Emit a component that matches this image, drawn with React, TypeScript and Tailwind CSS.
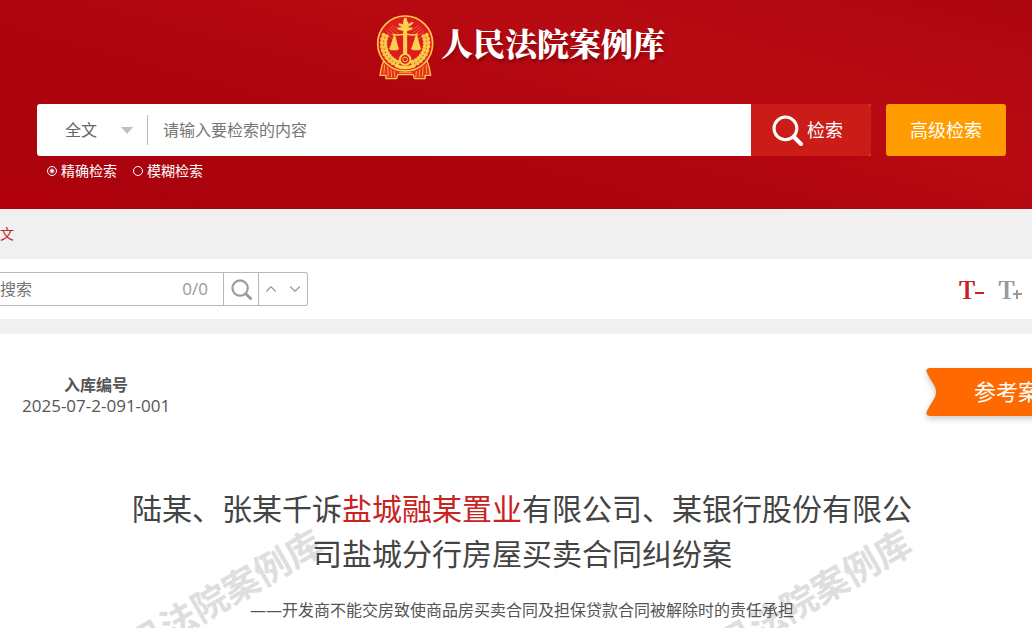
import { useState } from 'react';
import { ChevronDown, ChevronUp } from 'lucide-react';

const modes = [
  { label: '精确检索', value: 'exact' },
  { label: '模糊检索', value: 'fuzzy' },
];

// angles along the wreath, measured from straight down
const grains = [24, 34, 44, 54, 64, 74, 84, 94, 104, 114];

function Wreath({ side }: { side: 1 | -1 }) {
  return (
    <g fill="#f9c846">
      {grains.map((deg) => {
        const a = (deg * Math.PI) / 180;
        const x = 104 + side * 65 * Math.sin(a);
        const y = 106 + 65 * Math.cos(a);
        const turn = side * (90 - deg) + 90;
        return (
          <g key={deg} transform={`translate(${x} ${y}) rotate(${turn})`}>
            <ellipse cx="0" cy="-6" rx="7" ry="6" transform="rotate(30)" />
            <ellipse cx="0" cy="6" rx="7" ry="6" transform="rotate(-30)" />
          </g>
        );
      })}
    </g>
  );
}

function Emblem() {
  return (
    <svg viewBox="16 18 178 200" className="h-[67px] w-[59px] shrink-0" aria-hidden="true">
      <path
        d="M42 148 L33 176 L28 202 L46 202 L46 212 L78 212 L82 200 L128 200 L132 212 L164 212 L164 202 L181 202 L176 176 L167 148Z"
        fill="#e8301f"
        stroke="#f9c846"
        strokeWidth="4"
        strokeLinejoin="round"
      />
      <path
        d="M42 170l-2 26M51 176l2 30M61 184l2 24M71 189l2 20M167 170l2 26M158 176l-2 30M148 184l-2 24M138 189l-2 20M86 194h38"
        stroke="#f9a03c"
        strokeWidth="3"
        fill="none"
      />
      <circle cx="104" cy="106" r="83" fill="#e01b1f" stroke="#f9c846" strokeWidth="5" />
      <g stroke="#f07a3c" strokeWidth="2" fill="none">
        <path d="M48 69l30 22M53 62l30 22M58 56l26 19M64 51l20 14M44 77l28 20" />
        <path d="M161 69l-30 22M156 62l-30 22M151 56l-26 19M145 51l-20 14M165 77l-28 20" />
      </g>
      <Wreath side={-1} />
      <Wreath side={1} />
      <g fill="#fbd04e">
        <path d="M101 28h7l3 12 4 3-3 5 13-7 5 2-9 9-10 5 16 1-4 7-14 3v70h-10V68l-14-3-7-7 17-1-11-6 1-6 14 3-2-5z" />
        <path d="M66 75c12 6 20 1 38 2 18-1 26 4 38-2v5c-12 5-22 0-38 1-16-1-26 4-38-1z" />
        <path d="M70 80L57 121h27L74 80z" />
        <path d="M136 80l-13 41h28l-11-41z" />
        <path d="M54 119h33l-6 7H60zM120 119h34l-6 7h-22z" />
        <path d="M98 60h12v78H98z" />
      </g>
      <path d="M76 172q28 14 57 0" stroke="#fbd04e" strokeWidth="10" fill="none" />
      <circle cx="104" cy="154" r="16" fill="#dc1c1f" stroke="#fbd04e" strokeWidth="6" />
      <circle cx="104" cy="154" r="7" fill="#dc1c1f" stroke="#fbd04e" strokeWidth="3" />
    </svg>
  );
}

function SearchIcon({ className }: { className: string }) {
  return (
    <svg viewBox="0 0 30 30" className={className} fill="none" stroke="currentColor" aria-hidden="true">
      <circle cx="13" cy="13" r="11" strokeWidth="3" />
      <path d="M21 21L28 28" strokeWidth="4" strokeLinecap="round" />
    </svg>
  );
}

function Header() {
  const [mode, setMode] = useState('exact');

  return (
    <header className="h-[209px] bg-[linear-gradient(15deg,#b4000b_0%,#aa030d_12%,#ad040d_40%,#b80a13_66%,#b40912_82%,#ab050e_100%)] pr-[26px] pl-[37px] text-white">
      <div className="flex h-26 items-start justify-center gap-[6px] pt-[14px] pr-[2px]">
        <Emblem />
        <h1 className="pt-1 font-['Noto_Serif_CJK_SC','Noto_Sans_CJK_SC',serif] text-[32px] leading-12 font-black [text-shadow:1px_3px_3px_rgba(90,0,0,0.5)]">
          人民法院案例库
        </h1>
      </div>

      <form onSubmit={(e) => e.preventDefault()}>
        <div className="flex h-13 gap-[15px]">
          <div className="flex min-w-0 flex-1 overflow-hidden rounded-[3px] bg-white">
            <div className="flex w-[110px] shrink-0 items-center pr-[14px] pl-7">
              <select
                aria-label="检索范围"
                className="min-w-0 flex-1 appearance-none bg-transparent text-base text-[#666] outline-none"
              >
                <option>全文</option>
              </select>
              <svg viewBox="0 0 12 7" className="h-[7px] w-3 shrink-0" fill="#c0c0c0" aria-hidden="true">
                <path d="M0 0h12L6 7z" />
              </svg>
            </div>
            <div className="h-[30px] w-px shrink-0 self-center bg-[#bbb]" />
            <input
              type="text"
              aria-label="检索内容"
              placeholder="请输入要检索的内容"
              className="min-w-0 flex-1 px-[15px] text-base text-[#444] outline-none placeholder:text-[#757575]"
            />
            <button type="submit" className="flex w-30 shrink-0 items-center gap-1 bg-[#cc1c17] pl-[21px] text-lg">
              <SearchIcon className="size-[31px]" />
              检索
            </button>
          </div>
          <button type="button" className="w-30 shrink-0 rounded-[3px] bg-[#ff9c00] text-lg">
            高级检索
          </button>
        </div>

        <div className="flex gap-4 pt-[5px] pl-[10px]">
          {modes.map((item) => (
            <label key={item.value} className="flex items-center gap-1 text-sm leading-5">
              <input
                type="radio"
                name="mode"
                value={item.value}
                checked={mode === item.value}
                onChange={() => setMode(item.value)}
                className="size-[10px] appearance-none rounded-full border border-white checked:bg-[radial-gradient(circle,#fff_1px,transparent_3px)]"
              />
              {item.label}
            </label>
          ))}
        </div>
      </form>
    </header>
  );
}

function Toolbar() {
  return (
    <div className="flex h-15 items-center justify-between bg-white pr-[10px]">
      <div className="flex h-[34px] w-77 rounded-r-[3px] border border-l-0 border-[#b8b8b8] text-[#999]">
        <input
          type="text"
          aria-label="搜索"
          placeholder="搜索"
          className="min-w-0 flex-1 text-base text-[#444] outline-none placeholder:text-[#757575]"
        />
        <span className="self-center pr-[15px] text-[17px]">0/0</span>
        <button type="button" aria-label="查找" className="flex w-9 items-center justify-center border-x border-[#b8b8b8]">
          <SearchIcon className="size-[21px]" />
        </button>
        <div className="flex w-12 items-center justify-around">
          <button type="button" aria-label="上一个">
            <ChevronUp className="size-[18px]" strokeWidth={1.5} />
          </button>
          <button type="button" aria-label="下一个">
            <ChevronDown className="size-[18px]" strokeWidth={1.5} />
          </button>
        </div>
      </div>

      <div className="flex gap-[14px] font-['Noto_Serif_CJK_SC','Liberation_Serif',serif] text-2xl leading-6 font-bold">
        <button type="button" aria-label="缩小字号" className="flex items-end text-[#c4221f]">
          T
          <svg viewBox="0 0 9 12" className="h-3 w-[9px]" stroke="currentColor" strokeWidth="2" aria-hidden="true">
            <path d="M0 4h9" />
          </svg>
        </button>
        <button type="button" aria-label="放大字号" className="flex items-end text-[#999]">
          T
          <svg viewBox="0 0 9 12" className="-ml-[2px] h-3 w-[9px]" stroke="currentColor" strokeWidth="2" aria-hidden="true">
            <path d="M0 5h9M4 1v9" />
          </svg>
        </button>
      </div>
    </div>
  );
}

function Ribbon() {
  return (
    <div className="relative -mr-12 h-12 w-[154px] shrink-0 pl-12">
      <svg
        viewBox="0 0 154 48"
        className="absolute inset-0 h-12 w-[154px] overflow-visible drop-shadow-[0_3px_3px_rgba(0,0,0,0.2)]"
        aria-hidden="true"
      >
        <path d="M3 0H154V48H3Q-1 47 1 43Q4 37 8 31Q12 24 8 17Q4 11 1 5Q-1 1 3 0Z" fill="#ff6a00" />
      </svg>
      <span className="relative text-[22px] leading-[46px] whitespace-nowrap text-white">参考案例</span>
    </div>
  );
}

export default function App() {
  return (
    <div className="flex min-h-screen flex-col overflow-hidden bg-[#f0f0f0] font-['Open_Sans','Noto_Sans_CJK_SC',sans-serif]">
      <Header />

      <nav className="flex h-[50px] items-center text-sm text-[#c4221f]">
        <a href="#detail">文</a>
      </nav>

      <Toolbar />

      <main className="relative mt-[15px] flex-1 overflow-hidden bg-white">
        <div
          className="absolute top-[242px] left-[84px] flex gap-[337px] text-4xl leading-[54px] font-bold whitespace-nowrap text-[#dedede] select-none"
          aria-hidden="true"
        >
          <span className="-rotate-30">人民法院案例库</span>
          <span className="-rotate-30">人民法院案例库</span>
        </div>

        <div className="relative">
          <div className="flex items-start justify-between pt-[34px] pl-[22px]">
            <dl className="pt-[6px] text-center text-[#555]">
              <dt className="text-base leading-[22px] font-bold">入库编号</dt>
              <dd className="text-[17px] leading-5">2025-07-2-091-001</dd>
            </dl>
            <Ribbon />
          </div>

          <article className="pt-[70px] pl-3 text-center">
            <h2 className="mx-auto max-w-[788px] text-3xl leading-[45px] text-[#444]">
              陆某、张某千诉<span className="text-[#c9231f]">盐城融某置业</span>
              有限公司、某银行股份有限公司盐城分行房屋买卖合同纠纷案
            </h2>
            <p className="pt-[22px] text-base leading-6 text-[#555]">
              ——开发商不能交房致使商品房买卖合同及担保贷款合同被解除时的责任承担
            </p>
          </article>
        </div>
      </main>
    </div>
  );
}
